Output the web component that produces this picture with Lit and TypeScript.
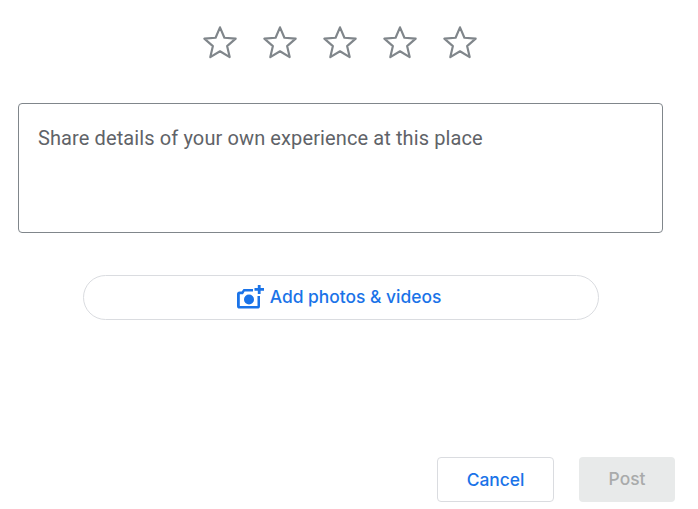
import { LitElement, html, css } from "lit";
import { customElement } from "lit/decorators.js";

const star = html`<svg class="star" viewBox="0 0 24 24" width="40" height="40"><path fill="none" stroke="#80868b" stroke-width="1.3" stroke-linejoin="round" d="M12 2.6L14.64 8.83 21.4 9.41 16.27 13.85 17.81 20.46 12 16.95 6.19 20.46 7.73 13.85 2.6 9.41 9.36 8.83z"/></svg>`;

@customElement("app-root")
export class AppRoot extends LitElement {
  static styles = css`
    :host { display: block; width: 698px; height: 509px; background: #fff; font-family: Roboto, sans-serif; overflow: hidden; }
    .page { display: flex; flex-direction: column; height: 509px; box-sizing: border-box; padding: 23px 23px 7px 18px; }
    .stars { display: flex; justify-content: center; gap: 20px; width: 644px; height: 40px; }
    .star { display: block; }
    .box { box-sizing: border-box; width: 645px; height: 130px; margin-top: 40px; border: 1px solid #80868b; border-radius: 4px; padding: 21px 19px; font-size: 20px; letter-spacing: 0.11px; line-height: 26px; color: #5f6368; }
    .add { box-sizing: border-box; align-self: flex-start; margin: 42px 0 0 65px; width: 516px; height: 45px; border: 1px solid #dadce0; border-radius: 23px; display: flex; align-items: center; justify-content: center; gap: 6px; color: #1a73e8; font-family: Inter, sans-serif; font-size: 17.4px; font-weight: 450; padding-right: 4px; }
    .add svg { display: block; margin-top: -1px; flex: none; }
    .add span { margin-bottom: 2px; }
    .actions { margin-top: auto; display: flex; justify-content: flex-end; gap: 25px; }
    .btn { box-sizing: border-box; height: 45px; border-radius: 4px; display: flex; align-items: center; justify-content: center; font-family: Inter, sans-serif; font-size: 17.4px; font-weight: 450; }
    .cancel { width: 117px; border: 1px solid #dadce0; color: #1a73e8; }
    .post { width: 96px; background: #e8eaea; color: #a9abab; padding-bottom: 2px; }
  `;

  render() {
    return html`<div class="page">
      <div class="stars">${star}${star}${star}${star}${star}</div>
      <div class="box">Share details of your own experience at this place</div>
      <div class="add">
        <svg width="27" height="24" viewBox="0 0 27 24"><path fill="#1a73e8" d="M20.8 0h2.8v3.1H27v2.7h-3.4V9h-2.8V5.8h-3.3V3.1h3.3V0zM6.5 4H16v2.6H7.6L6 9.2H2.8V21h17.7V11H23v10a2.6 2.6 0 0 1-2.6 2.6H2.6A2.6 2.6 0 0 1 0 21V9.2a2.6 2.6 0 0 1 2.6-2.6h2.1L6.5 4z"/><circle cx="12" cy="14.5" r="5" fill="#1a73e8"/></svg>
        <span>Add photos &amp; videos</span>
      </div>
      <div class="actions">
        <div class="btn cancel">Cancel</div>
        <div class="btn post">Post</div>
      </div>
    </div>`;
  }
}
